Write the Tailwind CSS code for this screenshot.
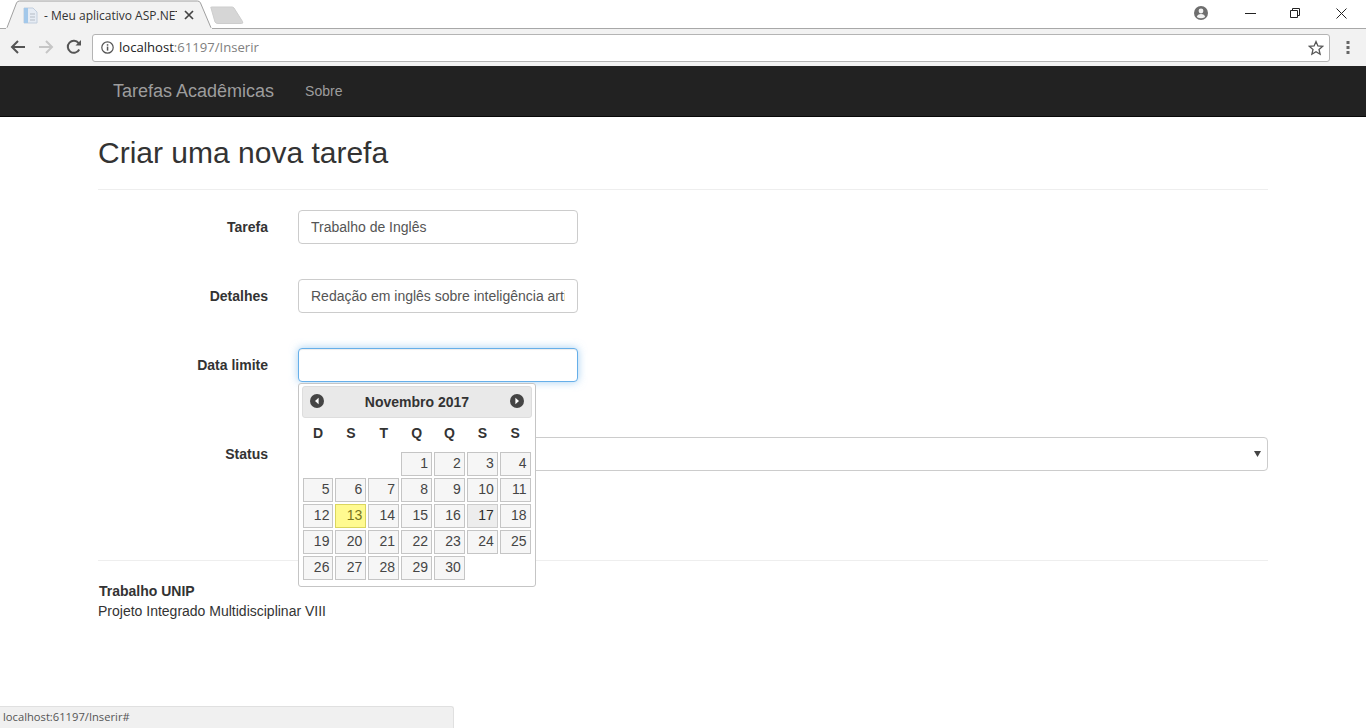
<!DOCTYPE html>
<html lang="pt-BR">
<head>
<meta charset="utf-8">
<title>Meu aplicativo ASP.NET</title>
<script src="https://cdn.jsdelivr.net/npm/@tailwindcss/browser@4"></script>
</head>
<body class="h-[728px] w-[1366px] overflow-hidden bg-white font-['Liberation_Sans',Arial,sans-serif] text-[14px] text-[#333] relative">

<!-- Tab strip -->
<div class="h-[29px] flex items-start relative border-b border-[#a8a8a8] bg-white">
  <svg class="absolute left-0 top-0" width="250" height="29" viewBox="0 0 250 29">
    <path d="M6.5 29 L16.5 3 Q17.3 1 19.5 1 L197.5 1 Q199.7 1 200.5 3 L211.5 29 Z" fill="#f2f2f2" stroke="#a0a0a0"/>
    <path d="M6 28.5 L212 28.5" stroke="#f2f2f2" stroke-width="1.5"/>
    <path d="M211 8 Q210 7 212 7 L232 7 Q233 7 234 8 L242.5 21.5 Q243.5 23.5 241.5 23.5 L218 23.5 Q216 23.5 215 22 Z" fill="#d6d6d6" stroke="#cdcdcd"/>
    <path d="M24 8 h9 l4 4 v11 h-13 z" fill="#e6ecf4" stroke="#c2cedd"/>
    <path d="M24 8 h4 v15 h-4 z" fill="#a3c8ea"/>
    <path d="M30 14 h5 M30 17 h5 M30 20 h5" stroke="#b5bcc5"/>
  </svg>
  <span class="absolute left-[44px] top-[8px] w-[133px] overflow-hidden whitespace-nowrap font-['Open_Sans',sans-serif] text-[12px] leading-[15px] text-[#333]">- Meu aplicativo ASP.NET</span>
  <svg class="absolute left-[184px] top-[10px]" width="10" height="10" viewBox="0 0 10 10"><path d="M1 1 L9 9 M9 1 L1 9" stroke="#444" stroke-width="1.7"/></svg>
  <!-- window controls -->
  <svg class="absolute left-[1194px] top-[6px]" width="14" height="14" viewBox="0 0 14 14"><circle cx="7" cy="7" r="7" fill="#6e6e6e"/><circle cx="7" cy="5" r="2.4" fill="#f2f2f2"/><path d="M2.8 11 Q3.5 8 7 8 Q10.5 8 11.2 11 Q7 13.6 2.8 11 Z" fill="#f2f2f2"/></svg>
  <svg class="absolute left-[1245px] top-[13px]" width="11" height="1" viewBox="0 0 11 1"><rect width="11" height="1" fill="#222"/></svg>
  <svg class="absolute left-[1290px] top-[8px]" width="10" height="10" viewBox="0 0 10 10"><path d="M.5 2.5 h7 v7 h-7 z M2.5 2.5 v-2 h7 v7 h-2" fill="none" stroke="#222"/></svg>
  <svg class="absolute left-[1336px] top-[8px]" width="11" height="11" viewBox="0 0 11 11"><path d="M.5 .5 L10.5 10.5 M10.5 .5 L.5 10.5" stroke="#222"/></svg>
</div>

<!-- Toolbar -->
<div class="h-[37px] bg-[#f2f2f2] flex items-center relative">
  <svg class="absolute left-[10px] top-[10px]" width="16" height="16" viewBox="0 0 16 16"><path d="M15 8 H2.5 M8 2 L2 8 L8 14" fill="none" stroke="#555" stroke-width="2"/></svg>
  <svg class="absolute left-[38px] top-[10px]" width="16" height="16" viewBox="0 0 16 16"><path d="M1 8 H13.5 M8 2 L14 8 L8 14" fill="none" stroke="#c6c6c6" stroke-width="2"/></svg>
  <svg class="absolute left-[66px] top-[10px]" width="16" height="16" viewBox="0 0 16 16"><path d="M13.2 10.5 A6 6 0 1 1 12.6 4.2" fill="none" stroke="#555" stroke-width="2"/><path d="M9.5 6.5 H15 V1 Z" fill="#555"/></svg>
  <div class="ml-[92px] h-[28px] w-[1238px] bg-white border border-[#b4b4b4] rounded-[3px] flex items-center pl-[8px] pr-[5px]">
    <svg width="13" height="13" viewBox="0 0 13 13" class="shrink-0"><circle cx="6.5" cy="6.5" r="5.7" fill="none" stroke="#555" stroke-width="1.2"/><rect x="5.8" y="5.6" width="1.5" height="4" fill="#555"/><rect x="5.8" y="3.2" width="1.5" height="1.5" fill="#555"/></svg>
    <span class="ml-[5px] font-['Open_Sans',sans-serif] text-[13.1px] text-[#222] whitespace-nowrap">localhost<span class="text-[#808080]">:61197/Inserir</span></span>
    <svg class="ml-auto" width="16" height="16" viewBox="0 0 16 16"><path d="M8 1.6 L9.9 6 L14.6 6.4 L11 9.5 L12.1 14.2 L8 11.7 L3.9 14.2 L5 9.5 L1.4 6.4 L6.1 6 Z" fill="none" stroke="#555" stroke-width="1.3"/></svg>
  </div>
  <svg class="absolute left-[1346px] top-[12px]" width="4" height="14" viewBox="0 0 4 14"><rect y="0" x=".5" width="3" height="3" fill="#666"/><rect y="5" x=".5" width="3" height="3" fill="#666"/><rect y="10" x=".5" width="3" height="3" fill="#666"/></svg>
</div>

<!-- Navbar -->
<nav class="h-[51px] bg-[#222] border-b border-[#080808] flex items-center pl-[113px]">
  <span class="text-[18px] text-[#9d9d9d]">Tarefas Acadêmicas</span>
  <span class="ml-[31px] text-[#9d9d9d]">Sobre</span>
</nav>

<!-- Page -->
<main class="w-[1170px] ml-[98px]">
  <h2 class="text-[30px] leading-[33px] text-[#333] mt-[19px] mb-[20px] pb-0">Criar uma nova tarefa</h2>
  <hr class="border-t border-[#eee] mb-[20px]">

  <div class="flex items-center gap-[30px] mb-[35px]">
    <label class="w-[170px] text-right font-bold">Tarefa</label>
    <input class="w-[280px] h-[34px] border border-[#ccc] rounded px-3 text-[#555] bg-white outline-none" value="Trabalho de Inglês">
  </div>
  <div class="flex items-center gap-[30px] mb-[35px]">
    <label class="w-[170px] text-right font-bold">Detalhes</label>
    <input class="w-[280px] h-[34px] border border-[#ccc] rounded px-3 text-[#555] bg-white outline-none" value="Redação em inglês sobre inteligência artificial">
  </div>
  <div class="flex items-center gap-[30px] mb-[55px]">
    <label class="w-[170px] text-right font-bold">Data limite</label>
    <div class="relative">
      <input class="block w-[280px] h-[34px] border border-[#66afe9] rounded px-3 text-[#555] bg-white outline-none shadow-[inset_0_1px_1px_rgba(0,0,0,.075),0_0_8px_rgba(102,175,233,.6)]">
      <!-- Datepicker -->
      <div class="absolute z-10 left-0 top-[35px] w-[238px] h-[204px] bg-white border border-[#c5c5c5] rounded-[3px] pt-[2px] px-[3px] text-[#454545]">
        <div class="h-[32px] bg-[#e9e9e9] border border-[#ddd] rounded-[3px] flex items-center justify-between px-[7px] pb-[2px]">
          <svg width="14" height="14" viewBox="0 0 14 14"><circle cx="7" cy="7" r="7" fill="#444"/><path d="M8.6 3.8 L5 7 L8.6 10.2 Z" fill="#fff"/></svg>
          <span class="font-bold text-[#333] pt-[2px]">Novembro 2017</span>
          <svg width="14" height="14" viewBox="0 0 14 14"><circle cx="7" cy="7" r="7" fill="#444"/><path d="M5.4 3.8 L9 7 L5.4 10.2 Z" fill="#fff"/></svg>
        </div>
        <div class="grid grid-cols-7 gap-x-[2px] w-[228px] ml-[.6px] mt-[3px] mb-[7px] h-[24px] items-center text-center font-bold text-[#333]">
          <span>D</span><span>S</span><span>T</span><span>Q</span><span>Q</span><span>S</span><span>S</span>
        </div>
        <div class="grid grid-cols-7 gap-[2px] w-[228px] ml-[.6px] auto-rows-[24px] text-right leading-[20px]">
          <span></span><span></span><span></span>
          <span class="border border-[#c5c5c5] bg-[#f6f6f6] pr-[3px]">1</span>
          <span class="border border-[#c5c5c5] bg-[#f6f6f6] pr-[3px]">2</span>
          <span class="border border-[#c5c5c5] bg-[#f6f6f6] pr-[3px]">3</span>
          <span class="border border-[#c5c5c5] bg-[#f6f6f6] pr-[3px]">4</span>
          <span class="border border-[#c5c5c5] bg-[#f6f6f6] pr-[3px]">5</span>
          <span class="border border-[#c5c5c5] bg-[#f6f6f6] pr-[3px]">6</span>
          <span class="border border-[#c5c5c5] bg-[#f6f6f6] pr-[3px]">7</span>
          <span class="border border-[#c5c5c5] bg-[#f6f6f6] pr-[3px]">8</span>
          <span class="border border-[#c5c5c5] bg-[#f6f6f6] pr-[3px]">9</span>
          <span class="border border-[#c5c5c5] bg-[#f6f6f6] pr-[3px]">10</span>
          <span class="border border-[#c5c5c5] bg-[#f6f6f6] pr-[3px]">11</span>
          <span class="border border-[#c5c5c5] bg-[#f6f6f6] pr-[3px]">12</span>
          <span class="border border-[#dad55e] bg-[#fffa90] text-[#777620] pr-[3px]">13</span>
          <span class="border border-[#c5c5c5] bg-[#f6f6f6] pr-[3px]">14</span>
          <span class="border border-[#c5c5c5] bg-[#f6f6f6] pr-[3px]">15</span>
          <span class="border border-[#c5c5c5] bg-[#f6f6f6] pr-[3px]">16</span>
          <span class="border border-[#cccccc] bg-[#ededed] text-[#2b2b2b] pr-[3px]">17</span>
          <span class="border border-[#c5c5c5] bg-[#f6f6f6] pr-[3px]">18</span>
          <span class="border border-[#c5c5c5] bg-[#f6f6f6] pr-[3px]">19</span>
          <span class="border border-[#c5c5c5] bg-[#f6f6f6] pr-[3px]">20</span>
          <span class="border border-[#c5c5c5] bg-[#f6f6f6] pr-[3px]">21</span>
          <span class="border border-[#c5c5c5] bg-[#f6f6f6] pr-[3px]">22</span>
          <span class="border border-[#c5c5c5] bg-[#f6f6f6] pr-[3px]">23</span>
          <span class="border border-[#c5c5c5] bg-[#f6f6f6] pr-[3px]">24</span>
          <span class="border border-[#c5c5c5] bg-[#f6f6f6] pr-[3px]">25</span>
          <span class="border border-[#c5c5c5] bg-[#f6f6f6] pr-[3px]">26</span>
          <span class="border border-[#c5c5c5] bg-[#f6f6f6] pr-[3px]">27</span>
          <span class="border border-[#c5c5c5] bg-[#f6f6f6] pr-[3px]">28</span>
          <span class="border border-[#c5c5c5] bg-[#f6f6f6] pr-[3px]">29</span>
          <span class="border border-[#c5c5c5] bg-[#f6f6f6] pr-[3px]">30</span>
        </div>
      </div>
    </div>
  </div>
  <div class="flex items-center gap-[30px]">
    <label class="w-[170px] text-right font-bold">Status</label>
    <div class="relative flex-1 h-[34px] border border-[#ccc] rounded bg-white">
      <svg class="absolute right-[6px] top-[13px]" width="7" height="6" viewBox="0 0 7 6"><path d="M0 0 H7 L3.5 6 Z" fill="#444"/></svg>
    </div>
  </div>
  <hr class="border-t border-[#eee] mt-[89px] mb-[20px]">
  <footer class="leading-[20px]">
    <div class="font-bold pl-px">Trabalho UNIP</div>
    <div>Projeto Integrado Multidisciplinar VIII</div>
  </footer>
</main>

<!-- Status bubble -->
<div class="absolute left-0 bottom-0 w-[454px] h-[22px] bg-[#f0f0f0] border-t border-r border-[#e0e0e0] rounded-tr-[3px] pl-[3px] font-['Open_Sans',sans-serif] text-[11.2px] leading-[20px] text-[#555]">localhost:61197/Inserir#</div>
</body>
</html>
